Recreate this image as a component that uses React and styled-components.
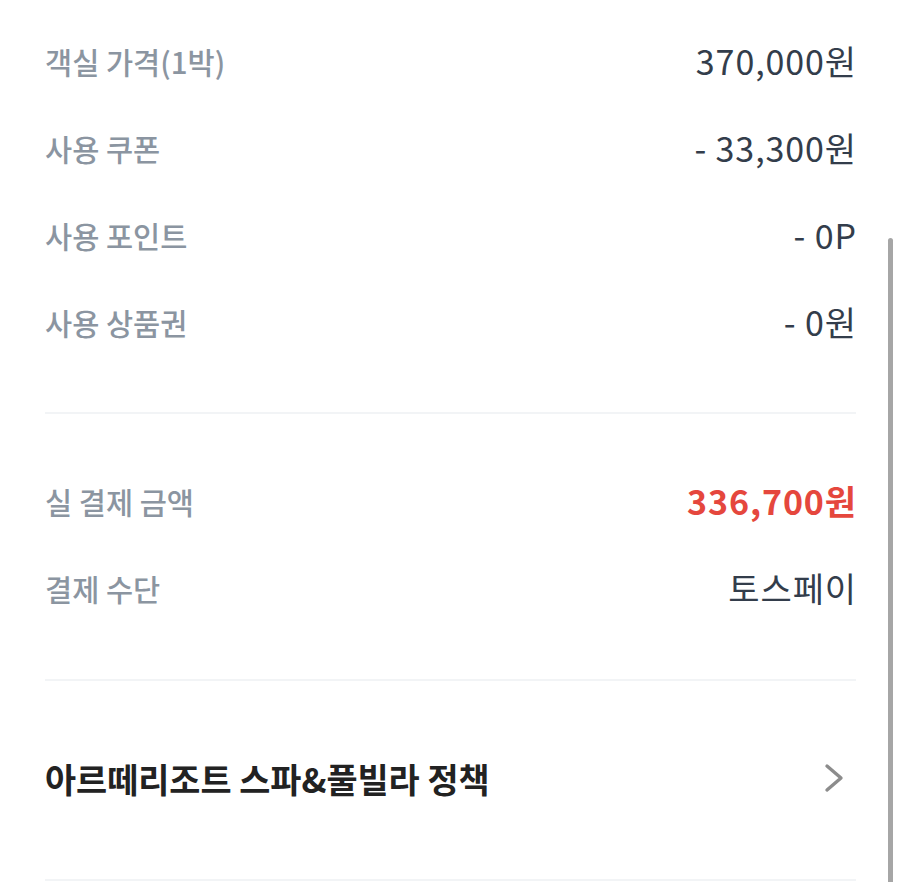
import React from "react";
import styled, { createGlobalStyle } from "styled-components";

const GlobalStyle = createGlobalStyle`
  body {
    margin: 0;
    background: #fff;
    font-family: "Noto Sans CJK KR", "Noto Sans", sans-serif;
  }
`;

const Page = styled.div`
  position: relative;
  width: 900px;
  height: 882px;
  overflow: hidden;
  background: #fff;
`;

const Content = styled.div`
  padding: 0 44px 0 45px;
`;

const Section = styled.section`
  padding: ${(p) => p.$pad || "46px 0"};
  border-bottom: 2px solid #f2f4f6;
`;

const Row = styled.div`
  box-sizing: border-box;
  display: flex;
  justify-content: space-between;
  align-items: center;
  height: 87px;
  padding-bottom: 6px;
`;

const Label = styled.span`
  font-size: 29.5px;
  font-weight: 500;
  color: #8b95a1;
`;

const Value = styled.span`
  font-size: 34px;
  letter-spacing: 0.9px;
  margin-right: -1px;
  font-weight: ${(p) => (p.$strong ? 700 : 400)};
  color: ${(p) => (p.$accent ? "#e5473d" : "#333d4b")};
`;

const PolicyRow = styled.div`
  box-sizing: border-box;
  display: flex;
  justify-content: space-between;
  align-items: center;
  height: 200px;
  padding-bottom: 4px;
  border-bottom: 2px solid #f2f4f6;
  cursor: pointer;
`;

const PolicyTitle = styled.span`
  font-size: 33.8px;
  font-weight: 700;
  color: #222;
`;

const Chevron = styled.svg`
  width: 24px;
  height: 30px;
  margin-right: 10px;
`;

const Scrollbar = styled.div`
  position: absolute;
  right: 7px;
  top: 238px;
  bottom: 0;
  width: 5px;
  border-radius: 3px 3px 0 0;
  background: #a6a6a6;
`;

const charges = [
  ["객실 가격(1박)", "370,000원"],
  ["사용 쿠폰", "- 33,300원"],
  ["사용 포인트", "- 0P"],
  ["사용 상품권", "- 0원"],
];

export default function App() {
  return (
    <Page>
      <GlobalStyle />
      <Content>
        <Section $pad="20px 0 44px">
          {charges.map(([label, value]) => (
            <Row key={label}>
              <Label>{label}</Label>
              <Value>{value}</Value>
            </Row>
          ))}
        </Section>
        <Section $pad="46px 0 45px">
          <Row>
            <Label>실 결제 금액</Label>
            <Value $accent $strong>336,700원</Value>
          </Row>
          <Row>
            <Label>결제 수단</Label>
            <Value>토스페이</Value>
          </Row>
        </Section>
        <PolicyRow>
          <PolicyTitle>아르떼리조트 스파&풀빌라 정책</PolicyTitle>
          <Chevron viewBox="0 0 24 30" fill="none" stroke="#8c8c8c" strokeWidth="3.4" strokeLinecap="round" strokeLinejoin="round">
            <path d="M5 3l14 12-14 12" />
          </Chevron>
        </PolicyRow>
      </Content>
      <Scrollbar />
    </Page>
  );
}
